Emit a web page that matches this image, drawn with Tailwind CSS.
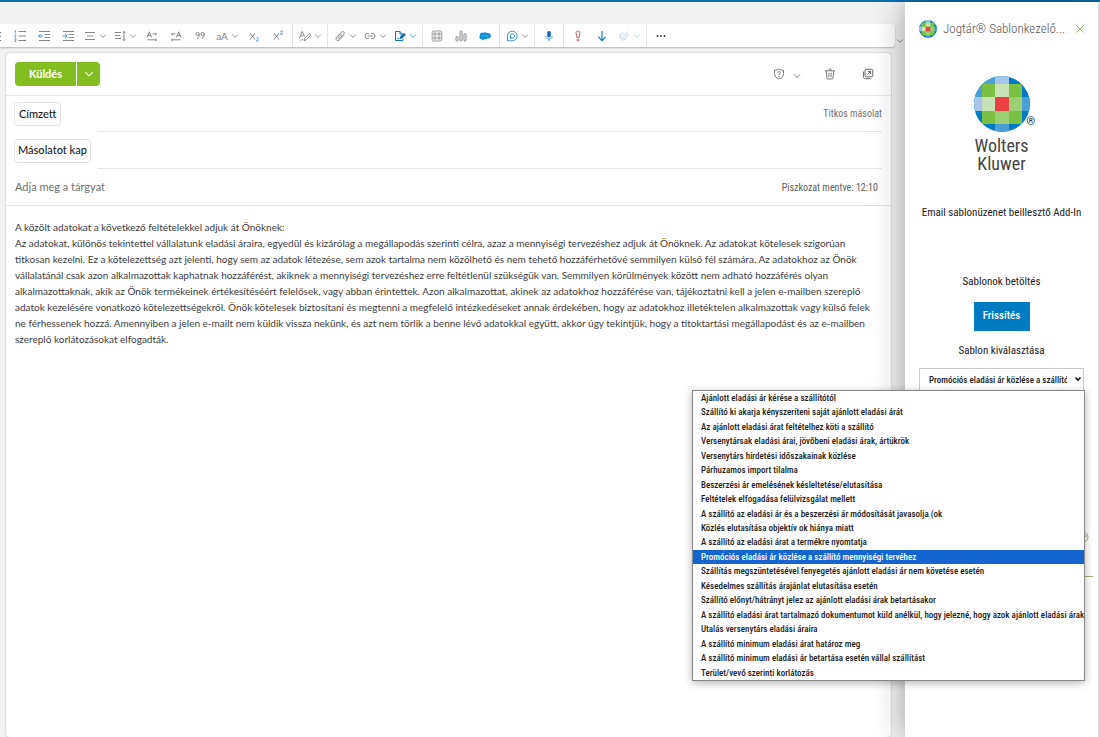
<!DOCTYPE html>
<html lang="hu">
<head>
<meta charset="utf-8">
<meta name="viewport" content="width=device-width, initial-scale=1">
<title>Új üzenet – Jogtár Sablonkezelő</title>
<script src="https://cdn.jsdelivr.net/npm/@tailwindcss/browser@4"></script>
</head>
<body class="flex min-h-screen flex-col overflow-x-hidden bg-[#f3f3f3] font-['Lato','Open_Sans',sans-serif] text-[#333]">
<svg class="hidden" aria-hidden="true">
  <symbol id="chev" viewBox="0 0 8 6"><path d="M1.2 1.6 4 4.4 6.8 1.6" fill="none" stroke="currentColor" stroke-width="0.8"/></symbol>
  <symbol id="wk" viewBox="0 0 56 56">
    <rect width="56" height="56" fill="#007ac3"/>
    <path d="M0 0H21V8H8V21H0Z" fill="#4a9fd6"/>
    <path d="M48 21h8v14h-8zM21 48h14v8H21z" fill="#4a9fd6"/>
    <path d="M21 0h14v8H21zM0 21h8v14H0z" fill="#a6c5e9"/>
    <rect x="8" y="8" width="40" height="40" fill="#7ac143"/>
    <path d="M21 8h14v13H21zM8 21h13v14H8z" fill="#c9e4b4"/>
    <path d="M35 21h13v14H35zM21 35h14v13H21z" fill="#9bd072"/>
    <rect x="21" y="21" width="14" height="14" fill="#ee3f43"/>
  </symbol>
</svg>

<div class="h-[2px] bg-[#0a6fae]"></div>

<div class="flex flex-1">
  <main class="flex min-w-0 flex-1 flex-col">
    <div class="flex items-end pt-[22px]">
      <div role="toolbar" aria-label="Formázás" class="flex h-[23px] flex-1 items-center rounded-r-sm bg-white text-[#7c7c7c] shadow-[0_1px_2px_rgba(0,0,0,0.25)]">
        <button aria-label="Felsorolás" class="flex h-full w-2 items-center"><svg class="h-3 w-[2px]" viewBox="0 0 2 12" stroke="currentColor"><path d="M0 2.5h1M0 6.5h1M0 10.5h1"/></svg></button>
        <button aria-label="Számozás" class="flex h-full w-6 items-center justify-center"><svg class="size-3" viewBox="0 0 12 12" fill="none" stroke="currentColor"><path d="M4.5 1.5H12M4.5 6H12M4.5 10.5H12" stroke-width=".9"/><path d="M.6.8h.9v2.6M.5 4.8h1.3v1.1L.5 7.2h1.5M.5 8.8h1.4v2.7H.5M.9 10.1h1" stroke="#2b88c8" stroke-width=".7"/></svg></button>
        <button aria-label="Behúzás csökkentése" class="flex h-full w-6 items-center justify-center"><svg class="size-3" viewBox="0 0 12 12" fill="none" stroke="currentColor" stroke-width=".9"><path d="M1 1.5h11M6.5 4.5H12M6.5 7.5H12M1 10.5h11"/><path d="M5 6H.6M2.4 4.2.6 6l1.8 1.8" stroke="#2b88c8"/></svg></button>
        <button aria-label="Behúzás növelése" class="flex h-full w-6 items-center justify-center"><svg class="size-3" viewBox="0 0 12 12" fill="none" stroke="currentColor" stroke-width=".9"><path d="M1 1.5h11M6.5 4.5H12M6.5 7.5H12M1 10.5h11"/><path d="M.6 6H5M3.2 4.2 5 6 3.2 7.8" stroke="#2b88c8"/></svg></button>
        <button aria-label="Igazítás" class="flex h-full w-[30px] items-center justify-center gap-0.5"><svg class="h-3 w-3.5" viewBox="0 0 14 12" fill="none" stroke="currentColor" stroke-width=".9"><path d="M2 2.5h10M4 6h6M2 9.5h10"/></svg><svg class="h-1.5 w-2"><use href="#chev"/></svg></button>
        <button aria-label="Sorköz" class="flex h-full w-[30px] items-center justify-center gap-0.5"><svg class="h-3 w-3.5" viewBox="0 0 14 12" fill="none" stroke="currentColor" stroke-width=".9"><path d="M2 2.5h6M2 5.5h5M2 8.5h6M11 1.5v9M9.7 2.8 11 1.5l1.3 1.3M9.7 9.2l1.3 1.3 1.3-1.3"/></svg><svg class="h-1.5 w-2"><use href="#chev"/></svg></button>
        <button aria-label="Balról jobbra" class="flex h-full w-6 items-center justify-center"><svg class="size-3" viewBox="0 0 12 12" fill="none" stroke="currentColor" stroke-width=".9"><path d="M1 7.500 3.300 1.800 5.500 7.500M1.800 5.600h3M6.500 4H10.500M9.300 2.800 10.500 4 9.300 5.200M1.500 9.800h9M9.300 8.600l1.200 1.200-1.200 1.200"/></svg></button>
        <button aria-label="Jobbról balra" class="flex h-full w-6 items-center justify-center"><svg class="size-3" viewBox="0 0 12 12" fill="none" stroke="currentColor" stroke-width=".9"><path d="M6.500 7.500 8.800 1.800l2.200 5.700M7.300 5.600h3M5.500 4H1.500M2.700 2.800 1.500 4l1.200 1.200M10.500 9.800h-9M2.700 8.600 1.500 9.800l1.200 1.200"/></svg></button>
        <button aria-label="Idézet" class="flex h-full w-6 items-center justify-center"><svg class="size-3" viewBox="0 0 12 12" fill="none" stroke="currentColor" stroke-width=".9"><circle cx="3.6" cy="4" r="1.6"/><path d="M5.2 4c.1 2-.6 3.6-2.2 4.6"/><circle cx="8.6" cy="4" r="1.6"/><path d="M10.2 4c.1 2-.6 3.6-2.2 4.6"/></svg></button>
        <button aria-label="Kis- és nagybetű" class="flex h-full w-[30px] items-center justify-center gap-0.5"><span class="w-3.5 text-center text-[10px] leading-3">aA</span><svg class="h-1.5 w-2"><use href="#chev"/></svg></button>
        <button aria-label="Alsó index" class="flex h-full w-6 items-center justify-center"><svg class="size-3" viewBox="0 0 12 12" fill="none" stroke="currentColor" stroke-width=".9"><path d="m2 3 5 6.5M7 3 2 9.5"/><path d="M8.4 8.3c.3-1 2-.9 1.9.2 0 .8-1.2 1.4-1.9 2.5h2.2" stroke="#2b88c8" stroke-width=".8"/></svg></button>
        <button aria-label="Felső index" class="flex h-full w-6 items-center justify-center"><svg class="size-3" viewBox="0 0 12 12" fill="none" stroke="currentColor" stroke-width=".9"><path d="m2 3 5 6.5M7 3 2 9.5"/><path d="M8.4 1.5c.3-1 2-.9 1.9.2 0 .8-1.2 1.4-1.9 2.5h2.2" stroke="#2b88c8" stroke-width=".8"/></svg></button>
        <span class="mx-0.5 h-full w-px bg-[#e4e4e4]"></span>
        <button aria-label="Stílusok" class="flex h-full w-[30px] items-center justify-center gap-0.5"><svg class="h-3 w-3.5" viewBox="0 0 14 12" fill="none" stroke="currentColor" stroke-width=".9"><path d="M1.5 8 4.2 1.5 6.5 6.5M2.4 6h3M6 10.8l.7-2.6 4-4c1-.9 2.400.4 1.500 1.500l-4 4zM5 9c-1.400.3-1.200 1.500-2.500 1.600"/></svg><svg class="h-1.5 w-2"><use href="#chev"/></svg></button>
        <span class="mx-0.5 h-full w-px bg-[#e4e4e4]"></span>
        <button aria-label="Fájl csatolása" class="flex h-full w-[30px] items-center justify-center gap-0.5"><svg class="h-3 w-3.5" viewBox="0 0 14 12" fill="none" stroke="currentColor" stroke-width=".9"><path d="M10.800 5.500 6.700 9.800c-2.100 2.100-5-.5-3-2.700l4.800-5c1.500-1.500 3.700.4 2.300 2L6.400 8.500c-.9.900-2-.1-1.200-1l3.500-3.700"/></svg><svg class="h-1.5 w-2"><use href="#chev"/></svg></button>
        <button aria-label="Hivatkozás" class="flex h-full w-[30px] items-center justify-center gap-0.5"><svg class="h-3 w-3.5" viewBox="0 0 14 12" fill="none" stroke="currentColor" stroke-width=".9"><path d="M6 3.500H4.500a2.500 2.500 0 0 0 0 5H6M8 3.500h1.500a2.500 2.500 0 0 1 0 5H8M4.500 6h5"/></svg><svg class="h-1.5 w-2"><use href="#chev"/></svg></button>
        <button aria-label="Aláírás" class="flex h-full w-[30px] items-center justify-center gap-0.5 text-[#1577bf]"><svg class="h-3 w-3.5" viewBox="0 0 14 12" fill="none" stroke="currentColor" stroke-width="1"><path d="M10 8.500v2H2.500V1.500H7L9.500 4M7 1.500V4h2.500M4 8.500c1-1 1 .5 2 0"/><path d="m7 8.500.6-2L11 3.400l1.500 1.400-3.400 3.200z" fill="#0f5f9c"/></svg><svg class="h-1.5 w-2"><use href="#chev"/></svg></button>
        <span class="mx-0.5 h-full w-px bg-[#e4e4e4]"></span>
        <button aria-label="Bővítmény" class="flex h-full w-6 items-center justify-center"><svg class="size-3" viewBox="0 0 12 12" fill="none" stroke="currentColor" stroke-width=".8"><rect x="1.200" y="1" width="9.600" height="10" rx="1.500"/><rect x="3" y="3" width="2" height="2"/><rect x="7" y="3" width="2" height="2"/><rect x="3" y="7" width="2" height="2"/><rect x="7" y="7" width="2" height="2"/></svg></button>
        <button aria-label="Szavazás" class="flex h-full w-6 items-center justify-center"><svg class="size-3" viewBox="0 0 12 12" fill="none" stroke="currentColor" stroke-width=".9"><rect x="1" y="6.500" width="2" height="4.500" rx=".8"/><rect x="5" y="1" width="2" height="10" rx=".8"/><rect x="9" y="3.500" width="2" height="7.500" rx=".8"/></svg></button>
        <button aria-label="Salesforce" class="flex h-full w-6 items-center justify-center"><svg class="size-3" viewBox="0 0 12 12"><path d="M2.600 9.200C.4 9.200-.2 6.300 1 5.300.5 3 3.200 1.800 4.700 3c1-1.100 2.500-.8 3.100.200 2-.9 4.300.5 4.100 2.700-.2 1.900-1.900 2.800-3.400 2.400-.6 1-1.800 1.200-2.700.7-.900 1.300-2.600 1.200-3.200.2z" fill="#0d8fd6"/><path d="M2.500 6h7" stroke="#7cc4ea" stroke-width=".8" stroke-dasharray="1 .5"/></svg></button>
        <span class="mx-0.5 h-full w-px bg-[#e4e4e4]"></span>
        <button aria-label="Loop" class="flex h-full w-[30px] items-center justify-center gap-0.5"><svg class="h-3 w-3.5" viewBox="0 0 14 12" fill="none" stroke="#2b88c8" stroke-width=".9"><path d="M2.500 11V6a4.800 4.800 0 1 1 4.800 4.800H2.500"/><circle cx="7.500" cy="6" r="2.100"/><path d="M5.400 6v3"/></svg><svg class="h-1.5 w-2"><use href="#chev"/></svg></button>
        <span class="mx-0.5 h-full w-px bg-[#e4e4e4]"></span>
        <button aria-label="Diktálás" class="flex h-full w-6 items-center justify-center"><svg class="size-3" viewBox="0 0 12 12" fill="none"><rect x="4.200" y="1" width="3.600" height="6.500" rx="1.800" fill="#0f6cbd"/><path d="M2.800 6c0 4 6.400 4 6.400 0M6 9v2.500" stroke="#4a9fd6" stroke-width=".9"/></svg></button>
        <span class="mx-0.5 h-full w-px bg-[#e4e4e4]"></span>
        <button aria-label="Magas fontosság" class="flex h-full w-6 items-center justify-center"><svg class="size-3" viewBox="0 0 12 12" fill="none" stroke="#c4545a" stroke-width=".9"><path d="M6 1c1.200 0 2.100.8 1.900 2L7 7.500H5L4.100 3C3.900 1.800 4.800 1 6 1z"/><circle cx="6" cy="10" r="1"/></svg></button>
        <button aria-label="Alacsony fontosság" class="flex h-full w-6 items-center justify-center"><svg class="size-3" viewBox="0 0 12 12" fill="none" stroke="#1577bf" stroke-width="1.200"><path d="M6 1v9.500M2.200 6.800 6 10.600l3.800-3.800"/></svg></button>
        <button aria-label="Érzékenység" disabled class="flex h-full w-[30px] items-center justify-center gap-0.5 text-[#b4d3e8]"><svg class="h-3 w-3.5" viewBox="0 0 14 12" fill="none" stroke="currentColor" stroke-width=".9"><path d="m3 4.500 5 5M3 4.500c-1.500 3 2 7 5 5l2-2-5-5zM8 4.500l3-3M9.500 6l2.500-2M4.500 8l1-1M6 9.500l1-1M10 3.500l1.500 1.500"/></svg><svg class="h-1.5 w-2"><use href="#chev"/></svg></button>
        <span class="mx-0.5 h-full w-px bg-[#e4e4e4]"></span>
        <button aria-label="További lehetőségek" class="flex h-full w-6 items-center justify-center text-[#333]"><svg class="size-3" viewBox="0 0 12 12" fill="currentColor"><circle cx="2.500" cy="6" r=".9"/><circle cx="6" cy="6" r=".9"/><circle cx="9.500" cy="6" r=".9"/></svg></button>
      </div>
      <button aria-label="Menüszalag" class="flex w-[10px] justify-center pb-[3px] text-[#777]"><svg class="h-1.5 w-2"><use href="#chev"/></svg></button>
    </div>

    <form class="mt-1.5 mr-[14px] ml-1.5 flex flex-1 flex-col rounded-sm bg-white shadow-[0_0_2px_rgba(0,0,0,0.3)]">
      <div class="flex h-[43px] items-center justify-between border-b border-[#e8e8e8] pr-[17px] pl-[9px]">
        <div class="flex h-6 gap-px">
          <button type="button" class="w-[61px] rounded-l-sm bg-[#84bd1f] text-[11px] font-bold text-white">Küldés</button>
          <button type="button" aria-label="Küldési lehetőségek" class="flex w-[23px] items-center justify-center rounded-r-sm bg-[#84bd1f] text-white"><svg class="h-2 w-3"><use href="#chev"/></svg></button>
        </div>
        <div class="flex items-center text-[#555]">
          <button type="button" aria-label="Bizalmasság"><svg class="size-3" viewBox="0 0 12 12" fill="none" stroke="currentColor" stroke-width=".8"><path d="M6 1c1.500 1 3 1.200 4.500 1.300v3.200C10.500 8.500 8.500 10.300 6 11 3.500 10.300 1.500 8.500 1.500 5.500V2.300C3 2.200 4.500 2 6 1z"/><path d="M4.800 4.800c0-1.700 2.500-1.500 2.400 0C7.100 5.800 6 5.700 6 6.900M6 7.900v.8"/></svg></button>
          <button type="button" aria-label="Bizalmassági lehetőségek" class="ml-2 pt-1"><svg class="h-1.5 w-2"><use href="#chev"/></svg></button>
          <button type="button" aria-label="Elvetés" class="ml-[23px]"><svg class="size-3" viewBox="0 0 12 12" fill="none" stroke="currentColor" stroke-width=".8"><path d="M1 2.800h10M4.500 2.500c0-2 3-2 3 0M2.200 3l.8 7.200c.1.500.400.8.900.8h4.200c.5 0 .8-.3.900-.8L9.800 3M4.900 5v4M7.100 5v4"/></svg></button>
          <button type="button" aria-label="Megnyitás új ablakban" class="ml-[26px]"><svg class="size-3" viewBox="0 0 12 12" fill="none" stroke="currentColor" stroke-width=".9"><rect x="3" y="1.300" width="7.800" height="7.500" rx="1.300"/><path d="M1.400 3.500v5.200c0 1.200.8 2 2 2h5.300M5.300 6.500 8.500 3.500M6 3.400h2.600v2.500"/></svg></button>
        </div>
      </div>

      <div class="flex h-9 items-center pr-[9px] pl-2">
        <button type="button" id="to" class="h-6 rounded-sm border border-[#e2e2e2] px-1 text-[11px] font-medium text-[#222]">Címzett</button>
        <div class="ml-9 flex h-full flex-1 items-center border-b border-[#e8e8e8]">
          <input aria-labelledby="to" class="h-6 min-w-0 flex-1 outline-none">
          <button type="button" class="font-['Roboto_Condensed','Roboto',sans-serif] text-[10px] text-[#707070]">Titkos másolat</button>
        </div>
      </div>
      <div class="flex h-[37px] items-center pr-[9px] pl-2">
        <button type="button" id="cc" class="h-6 rounded-sm border border-[#e2e2e2] px-[3px] text-[11px] font-medium text-[#222]">Másolatot kap</button>
        <div class="ml-[7px] flex h-full flex-1 items-center border-b border-[#e8e8e8]">
          <input aria-labelledby="cc" class="h-6 min-w-0 flex-1 outline-none">
        </div>
      </div>
      <div class="flex h-[37px] items-center border-b border-[#e4e4e4] pr-[13px] pl-[9px]">
        <input aria-label="Tárgy" placeholder="Adja meg a tárgyat" class="min-w-0 flex-1 text-[11px] text-[#333] outline-none placeholder:text-[#707070]">
        <span class="font-['Roboto_Condensed','Roboto',sans-serif] text-[10px] text-[#606060]">Piszkozat mentve: 12:10</span>
      </div>

      <div class="px-[9px] pt-[13px] text-[10px] leading-4 whitespace-nowrap text-[#3c3c3c]">
        <p>A közölt adatokat a következő feltételekkel adjuk át Önöknek:</p>
        <p>Az adatokat, különös tekintettel vállalatunk eladási áraira, egyedül és kizárólag a megállapodás szerinti célra, azaz a mennyiségi tervezéshez adjuk át Önöknek. Az adatokat kötelesek szigorúan<br>titkosan kezelni. Ez a kötelezettség azt jelenti, hogy sem az adatok létezése, sem azok tartalma nem közölhető és nem tehető hozzáférhetővé semmilyen külső fél számára. Az adatokhoz az Önök<br>vállalatánál csak azon alkalmazottak kaphatnak hozzáférést, akiknek a mennyiségi tervezéshez erre feltétlenül szükségük van. Semmilyen körülmények között nem adható hozzáférés olyan<br>alkalmazottaknak, akik az Önök termékeinek értékesítéséért felelősek, vagy abban érintettek. Azon alkalmazottat, akinek az adatokhoz hozzáférése van, tájékoztatni kell a jelen e-mailben szereplő<br>adatok kezelésére vonatkozó kötelezettségekről. Önök kötelesek biztosítani és megtenni a megfelelő intézkedéseket annak érdekében, hogy az adatokhoz illetéktelen alkalmazottak vagy külső felek<br>ne férhessenek hozzá. Amennyiben a jelen e-mailt nem küldik vissza nekünk, és azt nem törlik a benne lévő adatokkal együtt, akkor úgy tekintjük, hogy a titoktartási megállapodást és az e-mailben<br>szereplő korlátozásokat elfogadták.</p>
      </div>
    </form>
  </main>

  <aside class="relative z-10 flex w-[195px] flex-col items-center border-r-2 border-[#dcdcdc] bg-white px-[14px] font-['Roboto_Condensed','Roboto',sans-serif] text-[#222] shadow-[0_0_30px_rgba(0,0,0,0.36)]">
    <header class="flex w-full items-center pt-[18px]">
      <svg class="size-[18px] rounded-full"><use href="#wk"/></svg>
      <h1 class="ml-[6px] flex-1 text-[13px] leading-[18px] font-light whitespace-nowrap text-[#555]">Jogtár® Sablonkezelő...</h1>
      <button aria-label="Bezárás" class="text-[#8cc152]"><svg class="size-2" viewBox="0 0 8 8" stroke="currentColor" stroke-width="1"><path d="m.5.5 7 7M7.500.5l-7 7"/></svg></button>
    </header>
    <div class="relative mt-[38px]">
      <svg class="size-14 rounded-full"><use href="#wk"/></svg>
      <span class="absolute top-10 left-[53px] text-[11px] leading-3">®</span>
    </div>
    <p class="mt-[5px] text-center text-[18px] leading-[18px] text-[#444]"><span class="block">Wolters</span><span class="block">Kluwer</span></p>
    <p class="mt-8 text-[11px] leading-4 whitespace-nowrap">Email sablonüzenet beillesztő Add-In</p>
    <p class="mt-[53px] text-[11px] leading-4">Sablonok betöltés</p>
    <button class="mt-3 h-[29px] w-14 bg-[#007ac3] text-[11px] font-medium text-white">Frissítés</button>
    <label for="tpl" class="mt-3 text-[11px] leading-4">Sablon kiválasztása</label>
    <div class="relative mt-[7px] w-full">
      <select id="tpl" class="h-[25px] w-full appearance-none border border-[#ccc] pr-4 pl-[9px] text-[9px] font-medium text-[#222]"><option>Promóciós eladási ár közlése a szállító mennyiségi tervéhez</option></select>
      <svg class="pointer-events-none absolute top-[10px] right-[2px] h-1.5 w-2" viewBox="0 0 8 6" fill="none" stroke="#111" stroke-width="1.600"><path d="M1.500 1.500 4 4l2.500-2.500"/></svg>
      <ul role="listbox" aria-label="Sablonok" class="absolute top-6 -right-px z-20 grid h-[291px] w-[393px] auto-rows-fr grid-cols-1 border border-[#888] bg-white text-[9px] leading-[14px] font-medium whitespace-nowrap text-[#1c1c1c] shadow-[0_2px_8px_rgba(0,0,0,0.3)]">
        <li role="option" class="px-2">Ajánlott eladási ár kérése a szállítótól</li>
        <li role="option" class="px-2">Szállító ki akarja kényszeríteni saját ajánlott eladási árát</li>
        <li role="option" class="px-2">Az ajánlott eladási árat feltételhez köti a szállító</li>
        <li role="option" class="px-2">Versenytársak eladási árai, jövőbeni eladási árak, ártükrök</li>
        <li role="option" class="px-2">Versenytárs hirdetési időszakainak közlése</li>
        <li role="option" class="px-2">Párhuzamos import tilalma</li>
        <li role="option" class="px-2">Beszerzési ár emelésének késleltetése/elutasítása</li>
        <li role="option" class="px-2">Feltételek elfogadása felülvizsgálat mellett</li>
        <li role="option" class="px-2">A szállító az eladási ár és a beszerzési ár módosítását javasolja (ok</li>
        <li role="option" class="px-2">Közlés elutasítása objektív ok hiánya miatt</li>
        <li role="option" class="px-2">A szállító az eladási árat a termékre nyomtatja</li>
        <li role="option" aria-selected="true" class="bg-[#1464d2] px-2 text-white">Promóciós eladási ár közlése a szállító mennyiségi tervéhez</li>
        <li role="option" class="px-2">Szállítás megszüntetésével fenyegetés ajánlott eladási ár nem követése esetén</li>
        <li role="option" class="px-2">Késedelmes szállítás árajánlat elutasítása esetén</li>
        <li role="option" class="px-2">Szállító előnyt/hátrányt jelez az ajánlott eladási árak betartásakor</li>
        <li role="option" class="px-2">A szállító eladási árat tartalmazó dokumentumot küld anélkül, hogy jelezné, hogy azok ajánlott eladási árak</li>
        <li role="option" class="px-2">Utalás versenytárs eladási áraira</li>
        <li role="option" class="px-2">A szállító minimum eladási árat határoz meg</li>
        <li role="option" class="px-2">A szállító minimum eladási ár betartása esetén vállal szállítást</li>
        <li role="option" class="px-2">Terület/vevő szerinti korlátozás</li>
      </ul>
    </div>
    <div class="mt-[138px] -mr-[9px] flex h-[46px] w-5 items-start self-end border-b border-[#a3b97a] pl-1"><svg class="size-3" viewBox="0 0 12 12" fill="none" stroke="#9fb36b"><circle cx="6" cy="6" r="5"/><path d="M8 3.500 9 6"/></svg></div>
  </aside>
</div>
</body>
</html>
